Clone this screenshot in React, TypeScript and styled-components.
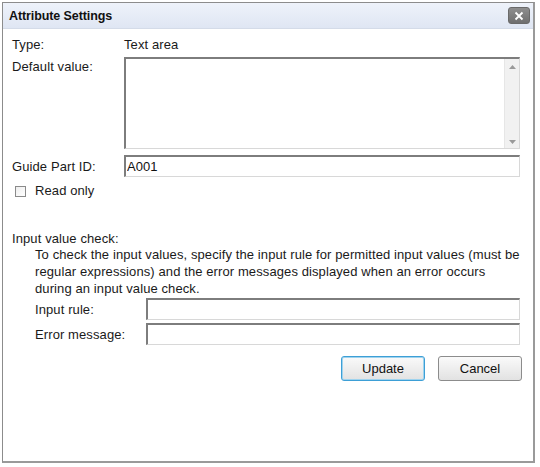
import styled, { createGlobalStyle } from 'styled-components';

const GlobalStyle = createGlobalStyle`
  html, body {
    margin: 0;
    padding: 0;
    background: #ffffff;
  }
  body {
    font-family: 'Liberation Sans', Arial, sans-serif;
    font-size: 13px;
    letter-spacing: 0.1px;
    color: #1a1a1a;
  }
`;

const Page = styled.div`
  width: 540px;
  height: 467px;
  padding: 2px 4px 4px 2px;
  box-sizing: border-box;
`;

const Dialog = styled.div`
  width: 533px;
  height: 461px;
  box-sizing: border-box;
  border: 1px solid #8c8c8c;
  border-right: 2px solid #9a9a9a;
  border-bottom: 2px solid #9a9a9a;
  background: #ffffff;
  display: flex;
  flex-direction: column;
`;

const TitleBar = styled.div`
  height: 25px;
  display: flex;
  align-items: center;
  justify-content: space-between;
  padding: 0 3px 0 6px;
  background: linear-gradient(#eef2fa, #dfe6f3);
  border-bottom: 1px solid #d4dbe8;
`;

const Title = styled.span`
  font-weight: bold;
  font-size: 12.5px;
  color: #111;
  letter-spacing: -0.1px;
`;

const CloseButton = styled.button`
  width: 22px;
  height: 17px;
  padding: 0;
  border: 1px solid #6a6a6a;
  border-radius: 3px;
  background: linear-gradient(#8e8e8e, #6f6f6f);
  display: flex;
  align-items: center;
  justify-content: center;
`;

const Body = styled.div`
  padding: 7px 13px 0 9px;
  display: flex;
  flex-direction: column;
`;

const Row = styled.div<{ $top?: number; $labelWidth?: number; $align?: string }>`
  display: grid;
  grid-template-columns: ${(p) => p.$labelWidth ?? 112}px 1fr;
  align-items: ${(p) => p.$align ?? 'center'};
  margin-top: ${(p) => p.$top ?? 0}px;
`;

const Label = styled.span<{ $pad?: number }>`
  padding-top: ${(p) => p.$pad ?? 0}px;
  line-height: 17px;
`;

const Value = styled.span`
  line-height: 17px;
`;

const TextAreaBox = styled.div`
  height: 92px;
  box-sizing: border-box;
  border-top: 2px solid #7d7d7d;
  border-left: 2px solid #7d7d7d;
  border-right: 1px solid #d8d8d8;
  border-bottom: 1px solid #d8d8d8;
  display: flex;
`;

const TextArea = styled.textarea`
  flex: 1;
  border: none;
  resize: none;
  outline: none;
  font: inherit;
`;

const ScrollBar = styled.div`
  width: 14px;
  background: #f1f1f1;
  border-left: 1px solid #e6e6e6;
  display: flex;
  flex-direction: column;
  justify-content: space-between;
  align-items: center;
  padding: 6px 0 4px;
`;

const Input = styled.input`
  height: 22px;
  box-sizing: border-box;
  border-top: 2px solid #7d7d7d;
  border-left: 2px solid #7d7d7d;
  border-right: 1px solid #d8d8d8;
  border-bottom: 1px solid #d8d8d8;
  padding: 0 1px;
  font: inherit;
  font-size: 13px;
  color: #111;
  outline: none;
  width: 100%;
`;

const CheckRow = styled.label`
  display: flex;
  align-items: center;
  gap: 9px;
  margin: 5px 0 0 3px;
  line-height: 17px;
`;

const CheckBox = styled.span`
  width: 11px;
  height: 11px;
  margin-top: 2px;
  box-sizing: border-box;
  border: 1px solid #8a8a8a;
  background: linear-gradient(135deg, #eeeeee, #ffffff);
`;

const Section = styled.div`
  margin-top: 31px;
  line-height: 17px;
`;

const Indent = styled.div`
  padding-left: 23px;
  display: flex;
  flex-direction: column;
`;

const Paragraph = styled.p`
  margin: -1px 0 0;
  line-height: 17px;
`;

const Buttons = styled.div`
  display: flex;
  justify-content: flex-end;
  gap: 13px;
  margin-top: 11px;
  margin-right: -2px;
`;

const Button = styled.button<{ $primary?: boolean }>`
  width: 84px;
  height: 25px;
  box-sizing: border-box;
  border: 1px solid ${(p) => (p.$primary ? '#3d9fd6' : '#8c8c8c')};
  box-shadow: ${(p) => (p.$primary ? 'inset 0 0 0 1px #9fd3ee' : 'none')};
  border-radius: 3px;
  background: linear-gradient(#fafafa, #e2e2e2);
  font-family: 'Liberation Sans', Arial, sans-serif;
  font-size: 13px;
  color: #111;
  padding: 0;
`;

function App(): JSX.Element {
  return (
    <Page>
      <GlobalStyle />
      <Dialog>
        <TitleBar>
          <Title>Attribute Settings</Title>
          <CloseButton aria-label="Close">
            <svg width="10" height="10" viewBox="0 0 10 10">
              <path d="M1.5 1.5 L8.5 8.5 M8.5 1.5 L1.5 8.5" stroke="#fff" strokeWidth="1.8" />
            </svg>
          </CloseButton>
        </TitleBar>
        <Body>
          <Row>
            <Label>Type:</Label>
            <Value>Text area</Value>
          </Row>
          <Row $top={4} $align="start">
            <Label $pad={1}>Default value:</Label>
            <TextAreaBox>
              <TextArea />
              <ScrollBar>
                <svg width="7" height="4" viewBox="0 0 7 4">
                  <path d="M0 4 L3.5 0 L7 4 Z" fill="#9a9a9a" />
                </svg>
                <svg width="7" height="4" viewBox="0 0 7 4">
                  <path d="M0 0 L3.5 4 L7 0 Z" fill="#9a9a9a" />
                </svg>
              </ScrollBar>
            </TextAreaBox>
          </Row>
          <Row $top={6}>
            <Label>Guide Part ID:</Label>
            <Input defaultValue="A001" />
          </Row>
          <CheckRow>
            <CheckBox />
            Read only
          </CheckRow>
          <Section>Input value check:</Section>
          <Indent>
            <Paragraph>
              To check the input values, specify the input rule for permitted input values (must be
              regular expressions) and the error messages displayed when an error occurs during an
              input value check.
            </Paragraph>
            <Row $top={1} $labelWidth={111}>
              <Label>Input rule:</Label>
              <Input />
            </Row>
            <Row $top={3} $labelWidth={111}>
              <Label>Error message:</Label>
              <Input />
            </Row>
          </Indent>
          <Buttons>
            <Button $primary>Update</Button>
            <Button>Cancel</Button>
          </Buttons>
        </Body>
      </Dialog>
    </Page>
  );
}

export default App;
